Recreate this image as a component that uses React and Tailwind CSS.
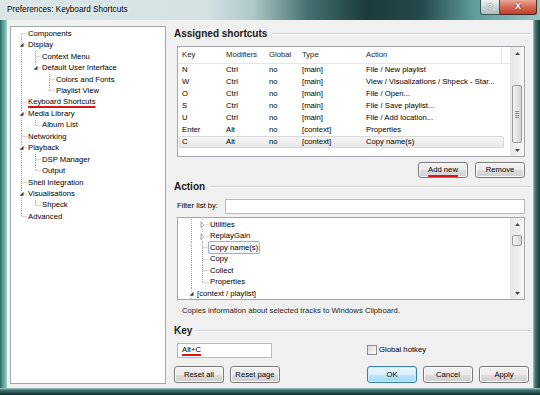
// Preferences: Keyboard Shortcuts — Vista-style dialog mock
import React from "react";

// ── Data ─────────────────────────────────────────────────────────────────────
const pageTree = [
  { t: "Components", l: 0 },
  { t: "Display", l: 0, open: true },
  { t: "Context Menu", l: 1 },
  { t: "Default User Interface", l: 1, open: true },
  { t: "Colors and Fonts", l: 2 },
  { t: "Playlist View", l: 2 },
  { t: "Keyboard Shortcuts", l: 0, mark: true },
  { t: "Media Library", l: 0, open: true },
  { t: "Album List", l: 1 },
  { t: "Networking", l: 0 },
  { t: "Playback", l: 0, open: true },
  { t: "DSP Manager", l: 1 },
  { t: "Output", l: 1 },
  { t: "Shell Integration", l: 0 },
  { t: "Visualisations", l: 0, open: true },
  { t: "Shpeck", l: 1 },
  { t: "Advanced", l: 0 },
];

const actionTree = [
  { t: "Utilities", l: 1, closed: true, guides: [0] },
  { t: "ReplayGain", l: 1, closed: true, guides: [0] },
  { t: "Copy name(s)", l: 1, sel: true, guides: [0] },
  { t: "Copy", l: 1, guides: [0] },
  { t: "Collect", l: 1, guides: [0] },
  { t: "Properties", l: 1, guides: [0], last: true },
  { t: "[context / playlist]", l: 0, open: true, guides: [] },
];

const shortcuts = [
  ["N", "Ctrl", "no", "[main]", "File / New playlist"],
  ["W", "Ctrl", "no", "[main]", "View / Visualizations / Shpeck - Star..."],
  ["O", "Ctrl", "no", "[main]", "File / Open..."],
  ["S", "Ctrl", "no", "[main]", "File / Save playlist..."],
  ["U", "Ctrl", "no", "[main]", "File / Add location..."],
  ["Enter", "Alt", "no", "[context]", "Properties"],
  ["C", "Alt", "no", "[context]", "Copy name(s)"],
];

// work out last-sibling flags and continuing guide lines for a full tree
function layoutTree(items) {
  const last = items.map((it, i) => {
    for (let j = i + 1; j < items.length; j++) {
      if (items[j].l < it.l) return true;
      if (items[j].l === it.l) return false;
    }
    return true;
  });
  return items.map((it, i) => {
    const guides = [];
    for (let k = 0; k < it.l; k++) {
      for (let j = i - 1; j >= 0; j--) {
        if (items[j].l === k) {
          if (!last[j]) guides.push(k);
          break;
        }
      }
    }
    return { ...it, last: last[i], first: i === 0, guides };
  });
}

const MARK = "underline decoration-[#d8141c] decoration-2 underline-offset-[2px]";

// ── Tree row ─────────────────────────────────────────────────────────────────
function TreeRow({ it, lineX, stubEnd, pads, rowH, hCls, width }) {
  const mid = rowH / 2;
  const x = lineX[it.l];
  const dot = { stroke: "#a3a3a3", strokeDasharray: "1 1", strokeWidth: 1 };
  return (
    <div className={`relative flex items-center ${hCls}`}>
      <svg className="absolute left-0 top-0" width={width} height={rowH}>
        {it.guides.map((k) => (
          <line key={k} x1={lineX[k]} x2={lineX[k]} y1={0} y2={rowH} {...dot} />
        ))}
        <line x1={x} x2={x} y1={it.first ? mid : 0} y2={it.last ? mid : rowH} {...dot} />
        <line x1={x} x2={stubEnd[it.l]} y1={mid} y2={mid} {...dot} />
        {it.open && (
          <g>
            <rect x={x - 3} y={mid - 3} width={6} height={6} fill="#fff" />
            <polygon points={`${x + 2},${mid - 2} ${x + 2},${mid + 2} ${x - 2},${mid + 2}`} fill="#3a3a3a" />
          </g>
        )}
        {it.closed && (
          <g>
            <rect x={x - 3} y={mid - 4} width={6} height={8} fill="#fff" />
            <polygon
              points={`${x - 1.5},${mid - 3} ${x + 1.5},${mid} ${x - 1.5},${mid + 3}`}
              fill="#fff"
              stroke="#8a8a8a"
              strokeWidth="0.8"
            />
          </g>
        )}
      </svg>
      <span className={`relative whitespace-nowrap leading-none ${pads[it.l]}`}>
        {it.sel ? (
          <span className="-ml-[2px] px-[1px] py-[1px] border border-[#8fb0d8] rounded-[2px] bg-[#f4f8fd]">{it.t}</span>
        ) : (
          <span className={it.mark ? MARK : ""}>{it.t}</span>
        )}
      </span>
    </div>
  );
}

// ── Small widgets ────────────────────────────────────────────────────────────
function Heading({ children }) {
  return (
    <div className="flex items-center h-[12px] gap-[5px]">
      <span className="text-[10px] font-bold leading-none text-[#1a1a1a]">{children}</span>
      <div className="flex-1 border-t border-b border-t-[#d3d3d3] border-b-white" />
    </div>
  );
}

function Btn({ children, focus, mark }) {
  return (
    <div
      className={`w-[50px] h-full flex items-center justify-center rounded-[3px] border leading-none ${
        focus
          ? "border-[#3c7fb1] bg-[linear-gradient(#eaf6fd_0%,#d9f0fc_50%,#bee6fd_50%,#a7d9f5_100%)] shadow-[inset_0_0_0_1px_#cde9f8]"
          : "border-[#7a7a7a] bg-[linear-gradient(#f2f2f2_0%,#ebebeb_50%,#dddddd_50%,#cfcfcf_100%)] shadow-[inset_0_0_0_1px_#fbfbfb]"
      }`}
    >
      <span className={mark ? "underline decoration-[#d8141c] decoration-2 underline-offset-[3px]" : ""}>{children}</span>
    </div>
  );
}

function Arrow({ up }) {
  return (
    <div className="h-[12px] flex items-center justify-center">
      <svg width="5" height="3">
        <polygon points={up ? "0,3 2.5,0 5,3" : "0,0 2.5,3 5,0"} fill="#4a4a4a" />
      </svg>
    </div>
  );
}

function Scrollbar({ thumb, grip }) {
  return (
    <div className="w-[14px] h-full flex flex-col bg-[linear-gradient(90deg,#e6e6e6,#f5f5f5)]">
      <Arrow up />
      <div className="flex-1">
        <div
          className={`mx-[2px] rounded-[2px] border border-[#999] bg-[linear-gradient(90deg,#f4f4f4,#e4e4e4_50%,#d5d5d5)] flex flex-col items-center justify-center gap-[1px] ${thumb}`}
        >
          {grip && [0, 1, 2, 3].map((i) => <div key={i} className="w-[4px] h-px bg-[#8a8a8a]" />)}
        </div>
      </div>
      <Arrow />
    </div>
  );
}

// ── Title bar ────────────────────────────────────────────────────────────────
function TitleBar() {
  return (
    <div className="h-[20px] flex justify-between bg-[linear-gradient(90deg,#dbe6e7_0%,#d4e2e3_38%,#adc7c8_47%,#44706f_57%,#1b3a3b_68%,#254a4b_78%,#5f9e9b_88%,#98c4c1_100%)]">
      <div className="pl-[7px] flex items-center text-[8.2px] text-black [text-shadow:0_0_5px_#fff]">
        Preferences: Keyboard Shortcuts
      </div>
      <div className="flex mr-[3px] self-start">
        <div className="w-[20px] h-[15px] border border-t-0 border-[#3d5358] rounded-bl-[3px] bg-[linear-gradient(#eef3f4,#c9d6d9_50%,#aebfc3)] flex items-center justify-center text-[8px] font-bold text-[#f4f4f4] [text-shadow:0_0_2px_#445]">
          ?
        </div>
        <div className="w-[37px] h-[15px] border border-t-0 border-l-0 border-[#4a2a28] rounded-br-[3px] bg-[linear-gradient(#e9a898,#d46a55_50%,#c0412b)] flex items-center justify-center text-[9px] font-bold text-white [text-shadow:0_0_2px_#600]">
          X
        </div>
      </div>
    </div>
  );
}

// ── App ──────────────────────────────────────────────────────────────────────
export default function App() {
  const left = layoutTree(pageTree);

  return (
    <div className="w-[540px] h-[395px] flex flex-col overflow-hidden bg-[#2d5a58] font-['Liberation_Sans',Arial,sans-serif] text-[7.7px] text-black">
      <TitleBar />

      <div className="flex flex-1 min-h-0">
        <div className="w-[7px] bg-[linear-gradient(90deg,#2f5f5b_0%,#4f9d95_35%,#6db7ad_75%,#b5d6d1_100%)]" />

        {/* ── Client area ─────────────────────────────────────────── */}
        <div className="flex-1 bg-[#f0f0f0] flex items-start">
          {/* Page tree */}
          <div className="mt-[6px] ml-[3px] w-[156px] h-[358px] border border-[#a3a6aa] bg-white pt-[1px]">
            {left.map((it) => (
              <TreeRow
                key={it.t}
                it={it}
                lineX={[10.5, 24.5, 38.5]}
                stubEnd={[16, 30, 44]}
                pads={["pl-[17px]", "pl-[31px]", "pl-[45px]"]}
                rowH={11.44}
                hCls="h-[11.44px]"
                width={154}
              />
            ))}
          </div>

          {/* Right column */}
          <div className="ml-[8px] w-[356px] flex flex-col">
            <div className="mt-[8px]">
              <Heading>Assigned shortcuts</Heading>
            </div>

            {/* Shortcut list */}
            <div className="mt-[6px] ml-[3px] w-[348px] h-[111px] border border-[#a3a6aa] bg-white flex">
              <div className="flex-1 flex flex-col">
                <div className="h-[17px] flex border-b border-[#e6e6e6] text-[#1e1e1e]">
                  <div className="grid grid-cols-[44px_43px_33px_64px_136px] items-center pl-[4px]">
                    <span>Key</span>
                    <span>Modifiers</span>
                    <span>Global</span>
                    <span>Type</span>
                    <span className="h-full flex items-center border-r border-[#e3e6ea]">Action</span>
                  </div>
                </div>
                {shortcuts.map((r, i) => (
                  <div
                    key={r[0]}
                    className={`h-[12px] w-[325px] ml-px grid grid-cols-[44px_43px_33px_64px_1fr] items-center pl-[3px] whitespace-nowrap ${
                      i === shortcuts.length - 1
                        ? "rounded-[2px] bg-[linear-gradient(#f7f7f7,#e5e5e5)] shadow-[inset_0_0_0_1px_#d9d9d9]"
                        : ""
                    }`}
                  >
                    {r.map((c, j) => (
                      <span key={j}>{c}</span>
                    ))}
                  </div>
                ))}
              </div>
              <Scrollbar thumb="mt-[26px] h-[58px]" grip />
            </div>

            <div className="mt-[5px] h-[16px] flex justify-end gap-[7px] pr-[5px]">
              <Btn mark>Add new</Btn>
              <Btn>Remove</Btn>
            </div>

            <div className="mt-[3px]">
              <Heading>Action</Heading>
            </div>

            <div className="mt-[5px] h-[16px] ml-[3px] flex items-center">
              <span className="w-[48px]">Filter list by:</span>
              <div className="w-[300px] h-[15px] border border-[#b7bcc2] bg-white" />
            </div>

            {/* Action tree */}
            <div className="mt-[3px] ml-[3px] w-[348px] h-[83px] border border-[#a3a6aa] bg-white flex">
              <div className="flex-1 pt-[1px]">
                {actionTree.map((it) => (
                  <TreeRow
                    key={it.t}
                    it={it}
                    lineX={[13.5, 24.5]}
                    stubEnd={[18, 31]}
                    pads={["pl-[19px]", "pl-[32px]"]}
                    rowH={11.5}
                    hCls="h-[11.5px]"
                    width={332}
                  />
                ))}
              </div>
              <Scrollbar thumb="mt-[5px] h-[11px]" />
            </div>

            <div className="mt-[4px] h-[13px] pl-[8px] flex items-center text-[#1e1e1e]">
              Copies information about selected tracks to Windows Clipboard.
            </div>

            <div className="mt-[8px]">
              <Heading>Key</Heading>
            </div>

            <div className="mt-[5px] h-[16px] ml-[3px] flex items-center">
              <div className="w-[95px] h-[15px] border border-[#b7bcc2] bg-white flex items-center pl-[4px]">
                <span className="underline decoration-[#d8141c] decoration-2 underline-offset-[2px]">Alt+C</span>
              </div>
              <div className="ml-[95px] w-[10px] h-[10px] border border-[#8e8f8f] bg-[linear-gradient(135deg,#dcdcdc,#fbfbfb)]" />
              <span className="ml-[2px]">Global hotkey</span>
            </div>

            <div className="mt-[8px] h-[17px] flex justify-between pr-[1px]">
              <div className="flex gap-[6px]">
                <Btn>Reset all</Btn>
                <Btn>Reset page</Btn>
              </div>
              <div className="flex gap-[6px]">
                <Btn focus>OK</Btn>
                <Btn>Cancel</Btn>
                <Btn>Apply</Btn>
              </div>
            </div>
          </div>
        </div>

        <div className="w-[7px] bg-[linear-gradient(90deg,#a7cbc7_0%,#3f7774_30%,#1b3838_100%)]" />
      </div>
      <div className="h-[7px] bg-[linear-gradient(#a7cbc7_0%,#3f7774_30%,#142c2c_100%)]" />
    </div>
  );
}
